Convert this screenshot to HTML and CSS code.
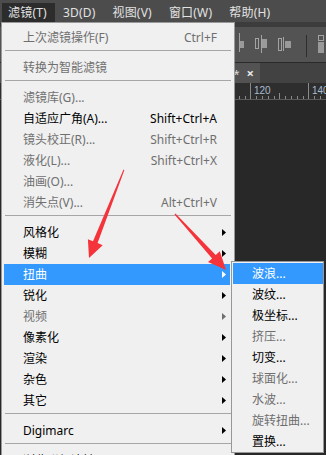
FILE: index.html
```html
<!DOCTYPE html>
<html>
<head>
<meta charset="utf-8">
<link rel="stylesheet" href="styles.css">
</head>
<body>
<div class="app">
  <div class="menubar">
    <span class="mi active">滤镜(T)</span>
    <span class="mi">3D(D)</span>
    <span class="mi">视图(V)</span>
    <span class="mi">窗口(W)</span>
    <span class="mi">帮助(H)</span>
  </div>
  <div class="optbar">
    <svg class="opticons" width="92" height="35" viewBox="0 0 92 35">
      <g stroke="#a3a3a3" stroke-width="1" fill="none" shape-rendering="crispEdges">
        <line x1="5.5" y1="6" x2="5.5" y2="25"/>
        <line x1="27.5" y1="8" x2="27.5" y2="26"/>
        <rect x="21.5" y="11.5" width="3" height="10"/>
        <line x1="49.5" y1="10" x2="49.5" y2="24"/>
        <rect x="44.5" y="11.5" width="3" height="12"/>
        <line x1="72.5" y1="8" x2="72.5" y2="30" stroke="#2e2e2e"/>
        <rect x="84.5" y="8.5" width="5" height="5"/>
      </g>
      <g fill="#9a9a9a" shape-rendering="crispEdges">
        <rect x="6" y="14" width="4" height="7"/>
        <rect x="28" y="12" width="5" height="9"/>
        <rect x="51" y="14" width="6" height="7"/>
        <rect x="84" y="15" width="6" height="11"/>
      </g>
    </svg>
  </div>
  <div class="tabbar">
    <div class="tab"><span class="tabtitle">未标题-1 @ 100% (RGB/8) *</span><span class="close">×</span></div>
  </div>
  <div class="ruler">
    <svg width="326" height="17" viewBox="0 0 326 17">
      <g stroke="#8a8a8a" stroke-width="1" shape-rendering="crispEdges">
        <line x1="250.5" y1="0" x2="250.5" y2="17"/>
        <line x1="308.5" y1="0" x2="308.5" y2="17"/>
        <line x1="239" y1="13" x2="239" y2="17"/>
        <line x1="245" y1="13" x2="245" y2="17"/>
        <line x1="256" y1="13" x2="256" y2="17"/>
        <line x1="262" y1="13" x2="262" y2="17"/>
        <line x1="268" y1="13" x2="268" y2="17"/>
        <line x1="274" y1="13" x2="274" y2="17"/>
        <line x1="279.5" y1="10" x2="279.5" y2="17"/>
        <line x1="285" y1="13" x2="285" y2="17"/>
        <line x1="291" y1="13" x2="291" y2="17"/>
        <line x1="297" y1="13" x2="297" y2="17"/>
        <line x1="303" y1="13" x2="303" y2="17"/>
        <line x1="314" y1="13" x2="314" y2="17"/>
        <line x1="320" y1="13" x2="320" y2="17"/>
        <line x1="0" y1="16.5" x2="326" y2="16.5" stroke="#5a5a5a"/>
      </g>
      <text x="254" y="11" class="rnum">120</text>
      <text x="312" y="11" class="rnum">140</text>
    </svg>
  </div>
  <div class="canvas"></div>
</div>

<div class="menu">
  <div class="row dis"><span class="label">上次滤镜操作(F)</span><span class="key">Ctrl+F</span><span class="arr"></span></div>
  <div class="sep"></div>
  <div class="row dis"><span class="label">转换为智能滤镜</span><span class="arr"></span></div>
  <div class="sep"></div>
  <div class="row dis"><span class="label">滤镜库(G)...</span><span class="arr"></span></div>
  <div class="row"><span class="label">自适应广角(A)...</span><span class="key">Shift+Ctrl+A</span><span class="arr"></span></div>
  <div class="row dis"><span class="label">镜头校正(R)...</span><span class="key">Shift+Ctrl+R</span><span class="arr"></span></div>
  <div class="row dis"><span class="label">液化(L)...</span><span class="key">Shift+Ctrl+X</span><span class="arr"></span></div>
  <div class="row dis"><span class="label">油画(O)...</span><span class="arr"></span></div>
  <div class="row dis"><span class="label">消失点(V)...</span><span class="key">Alt+Ctrl+V</span><span class="arr"></span></div>
  <div class="sep"></div>
  <div class="row"><span class="label">风格化</span><span class="arr"><i></i></span></div>
  <div class="row"><span class="label">模糊</span><span class="arr"><i></i></span></div>
  <div class="row hi"><span class="label">扭曲</span><span class="arr"><i></i></span></div>
  <div class="row"><span class="label">锐化</span><span class="arr"><i></i></span></div>
  <div class="row dis"><span class="label">视频</span><span class="arr"><i></i></span></div>
  <div class="row"><span class="label">像素化</span><span class="arr"><i></i></span></div>
  <div class="row"><span class="label">渲染</span><span class="arr"><i></i></span></div>
  <div class="row"><span class="label">杂色</span><span class="arr"><i></i></span></div>
  <div class="row"><span class="label">其它</span><span class="arr"><i></i></span></div>
  <div class="sep"></div>
  <div class="row"><span class="label">Digimarc</span><span class="arr"><i></i></span></div>
  <div class="sep"></div>
  <div class="row"><span class="label">浏览联机滤镜...</span><span class="arr"></span></div>
</div>

<div class="submenu">
  <div class="row hi"><span class="label">波浪...</span></div>
  <div class="row"><span class="label">波纹...</span></div>
  <div class="row"><span class="label">极坐标...</span></div>
  <div class="row dis"><span class="label">挤压...</span></div>
  <div class="row"><span class="label">切变...</span></div>
  <div class="row dis"><span class="label">球面化...</span></div>
  <div class="row dis"><span class="label">水波...</span></div>
  <div class="row dis"><span class="label">旋转扭曲...</span></div>
  <div class="row"><span class="label">置换...</span></div>
</div>

<svg class="annot" width="326" height="455" viewBox="0 0 326 455">
  <polygon fill="#f5333a" points="124.4,170 97.6,243.1 102.7,245.2 89,258 87.9,239.2 93,241.3 123.5,169.6"/>
  <polygon fill="#f5333a" points="175.5,213.6 215.7,255 219.8,251.3 226,270 208,262.1 212.1,258.4 174.5,214.4"/>
</svg>
</body>
</html>
```

FILE: styles.css
```css
html, body {
  margin: 0;
  padding: 0;
  width: 326px;
  height: 455px;
  overflow: hidden;
  background: #282828;
  font-family: "Noto Sans", "Noto Sans CJK SC", sans-serif;
}

.app {
  display: flex;
  flex-direction: column;
  height: 455px;
}

.menubar {
  display: flex;
  height: 22px;
  box-sizing: border-box;
  padding: 3px 0 0 2px;
  background: #4c4c4c;
}

.mi {
  height: 19px;
  line-height: 19px;
  padding: 0 11px 0 6px;
  font-size: 12px;
  color: #e2e2e2;
  white-space: nowrap;
  letter-spacing: 0.2px;
}

.mi.active {
  background: #2c2c2c;
  padding-right: 8px;
}

.mi.active + .mi {
  padding-left: 8px;
}

.optbar {
  height: 40px;
  box-sizing: border-box;
  border-top: 5px solid #3c3c3c;
  background: #535353;
  padding-left: 234px;
}

.opticons {
  display: block;
}

.tabbar {
  height: 21px;
  box-sizing: border-box;
  border-top: 1px solid #2a2a2a;
  background: #424242;
  display: flex;
}

.tab {
  width: 260px;
  display: flex;
  justify-content: flex-end;
  align-items: center;
  gap: 7px;
  padding-right: 6px;
  box-sizing: border-box;
  background: #535353;
  color: #dcdcdc;
  font-size: 11px;
  white-space: nowrap;
}

.close {
  font-size: 13px;
  font-weight: bold;
  color: #e8e8e8;
}

.ruler {
  height: 17px;
  background: #2e2e2e;
}

.ruler svg {
  display: block;
}

.rnum {
  font-family: "Liberation Sans", sans-serif;
  font-size: 10px;
  fill: #a9bccf;
}

.canvas {
  flex: 1;
  background: #282828;
}

.menu {
  position: absolute;
  left: 1px;
  top: 22px;
  width: 234px;
  height: 440px;
  box-sizing: border-box;
  border: 1px solid #999999;
  background: #f0f0f0;
  padding-top: 4px;
  overflow: hidden;
}

.row {
  display: flex;
  align-items: center;
  height: 21px;
  line-height: 21px;
  margin: 0 4px 0 2px;
  padding-left: 19px;
  font-size: 12px;
  color: #000;
  white-space: nowrap;
}

.row.dis {
  color: #6f6f6f;
}

.row.hi {
  background: #3399ff;
  color: #fff;
}

.label {
  flex: 1;
}

.arr {
  width: 13px;
  height: 21px;
  box-sizing: border-box;
  padding-right: 4px;
  display: flex;
  justify-content: flex-end;
  align-items: center;
}

.arr i {
  display: block;
  width: 4px;
  height: 7px;
  background: currentColor;
  clip-path: polygon(0 0, 100% 50%, 0 100%);
}

.sep {
  height: 1px;
  margin: 2px 3px 6px 3px;
  background: #a6a6a6;
}

.submenu {
  position: absolute;
  left: 231px;
  top: 261px;
  width: 93px;
  height: 192px;
  box-sizing: border-box;
  border: 1px solid #979797;
  background: #f0f0f0;
  padding-top: 1px;
}

.submenu .row {
  margin: 0 0 0 1px;
}

.annot {
  position: absolute;
  left: 0;
  top: 0;
  pointer-events: none;
}
```
